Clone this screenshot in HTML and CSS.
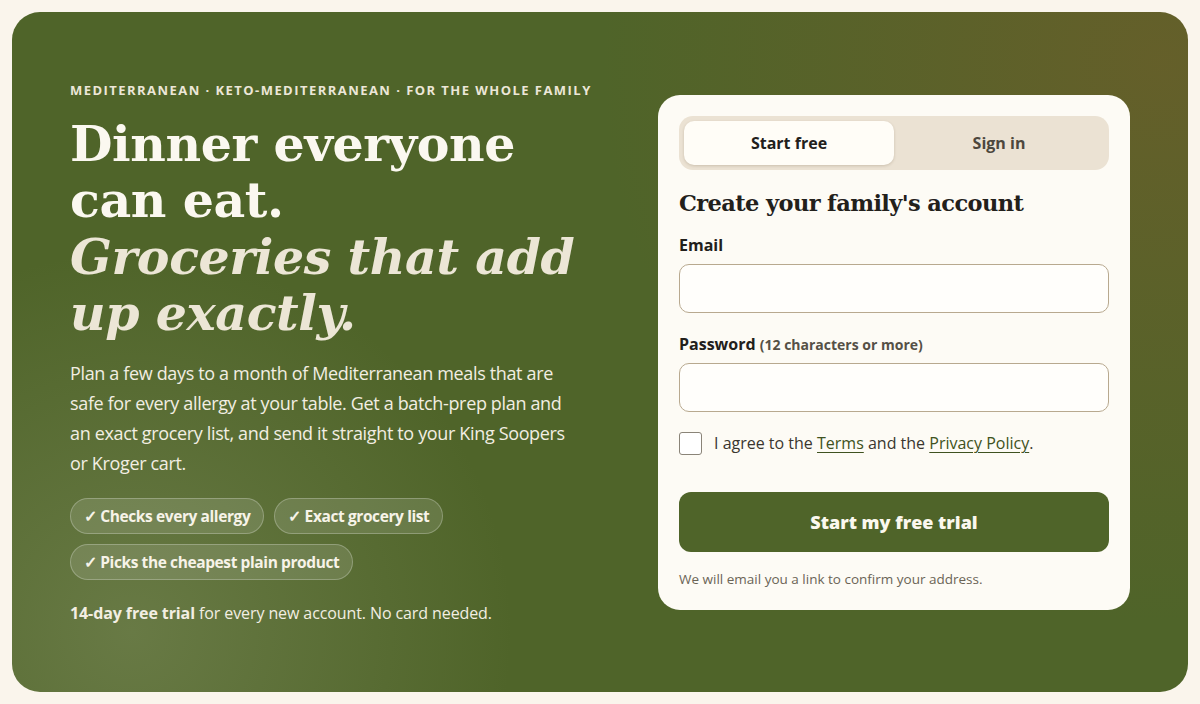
FILE: index.html
```html
<!DOCTYPE html>
<html lang="en">
<head>
<meta charset="utf-8">
<title>Dinner everyone can eat</title>
<link rel="stylesheet" href="styles.css">
</head>
<body>
<main class="hero">
  <section class="intro">
    <p class="eyebrow">MEDITERRANEAN · KETO-MEDITERRANEAN · FOR THE WHOLE FAMILY</p>
    <h1 class="headline">Dinner everyone can&nbsp;eat.<br><em>Groceries that add up exactly.</em></h1>
    <p class="lead">Plan a few days to a month of Mediterranean meals that are safe for every allergy at your table. Get a batch-prep plan and an exact grocery list, and send it straight to your King Soopers or Kroger cart.</p>
    <ul class="chips">
      <li class="chip">✓ Checks every allergy</li>
      <li class="chip">✓ Exact grocery list</li>
      <li class="chip">✓ Picks the cheapest plain product</li>
    </ul>
    <p class="trial"><strong>14-day free trial</strong> for every new account. No card needed.</p>
  </section>
  <section class="card">
    <div class="tabs">
      <button class="tab tab-active" type="button">Start free</button>
      <button class="tab" type="button">Sign in</button>
    </div>
    <h2 class="card-title">Create your family's account</h2>
    <form class="form">
      <label class="field">
        <span class="label">Email</span>
        <input class="input" type="email">
      </label>
      <label class="field">
        <span class="label">Password <span class="hint">(12 characters or more)</span></span>
        <input class="input" type="password">
      </label>
      <label class="agree">
        <span class="box"></span>
        <span>I agree to the <a class="link" href="#">Terms</a> and the <a class="link" href="#">Privacy Policy</a>.</span>
      </label>
      <button class="submit" type="button">Start my free trial</button>
      <p class="note">We will email you a link to confirm your address.</p>
    </form>
  </section>
</main>
</body>
</html>
```

FILE: styles.css
```css
* { box-sizing: border-box; }
html, body { margin: 0; }
body {
  background: #faf5ec;
  padding: 12px;
  font-family: "Open Sans", "Noto Sans", sans-serif;
  color: #22201b;
  height: 704px;
}
.hero {
  height: 680px;
  border-radius: 28px;
  background:
    radial-gradient(circle 380px at 120px 620px, rgba(125,140,92,0.55), rgba(125,140,92,0) 100%),
    radial-gradient(circle 560px at 1150px 50px, rgba(106,94,42,0.8), rgba(106,94,42,0) 100%),
    #4f6429;
  display: grid;
  grid-template-columns: 1fr 472px;
  column-gap: 48px;
  align-items: center;
  padding: 0 58px;
  color: #f7f3e8;
}
.eyebrow {
  margin: 0 0 17px;
  font-size: 13px;
  font-weight: 700;
  letter-spacing: 1.45px;
  color: #ece7d8;
}
.headline {
  margin: 0;
  font-family: "DejaVu Serif", Georgia, serif;
  font-size: 49px;
  line-height: 56.5px;
  font-weight: 700;
  color: #fbf8f0;
  letter-spacing: -0.4px;
}
.headline em {
  color: #ece6d6;
}
.lead {
  margin: 16px 0 0;
  font-size: 18px;
  line-height: 30px;
  letter-spacing: -0.35px;
  color: #f2eee2;
  max-width: 512px;
}
.chips {
  list-style: none;
  margin: 20px 0 0;
  padding: 0;
  display: flex;
  flex-wrap: wrap;
  gap: 10px;
  max-width: 420px;
}
.chip {
  height: 36px;
  padding: 0 13px;
  display: flex;
  align-items: center;
  border-radius: 18px;
  background: rgba(255,255,255,0.12);
  border: 1px solid rgba(255,255,255,0.25);
  font-size: 15.5px;
  font-weight: 700;
  letter-spacing: -0.4px;
  color: #f7f3e8;
}
.trial {
  margin: 22px 0 0;
  font-size: 16px;
  letter-spacing: -0.1px;
  color: #f2eee2;
}
.trial strong { font-weight: 700; }

.card {
  background: #fdfbf5;
  border-radius: 22px;
  padding: 21px 21px 22px;
  color: #22201b;
}
.tabs {
  display: grid;
  grid-template-columns: 1fr 1fr;
  background: #ebe2d3;
  border-radius: 14px;
  padding: 5px;
  height: 54px;
}
.tab {
  border: 0;
  background: transparent;
  font-family: inherit;
  font-size: 16px;
  font-weight: 700;
  color: #4d473d;
  border-radius: 10px;
}
.tab-active {
  background: #fffdf7;
  color: #22201b;
  box-shadow: 0 1px 3px rgba(80,60,30,0.2);
}
.card-title {
  margin: 20px 0 0;
  font-family: "DejaVu Serif", Georgia, serif;
  font-size: 22.5px;
  letter-spacing: -0.6px;
  font-weight: 700;
  color: #22201b;
}
.form { margin-top: 18px; }
.field { display: block; margin-bottom: 20px; }
.label {
  display: block;
  font-size: 16px;
  font-weight: 700;
  margin-bottom: 8px;
}
.hint {
  font-size: 14px;
  color: #555046;
}
.input {
  display: block;
  width: 100%;
  height: 49px;
  border: 1.5px solid #b8a98f;
  border-radius: 10px;
  background: #fffefb;
}
.agree {
  display: flex;
  align-items: center;
  gap: 12px;
  font-size: 16px;
  color: #3a362f;
}
.box {
  width: 23px;
  height: 23px;
  border: 1.5px solid #8a8478;
  border-radius: 3px;
  background: #fff;
  flex: none;
}
.link {
  color: #3f5220;
  text-decoration: underline;
  text-underline-offset: 3px;
}
.submit {
  display: block;
  width: 100%;
  height: 60px;
  margin-top: 37px;
  border: 0;
  border-radius: 12px;
  background: #4f6429;
  color: #fbf8ee;
  font-family: inherit;
  font-size: 18px;
  font-weight: 800;
}
.note {
  margin: 18px 0 0;
  font-size: 13.5px;
  color: #6b6456;
}
```
